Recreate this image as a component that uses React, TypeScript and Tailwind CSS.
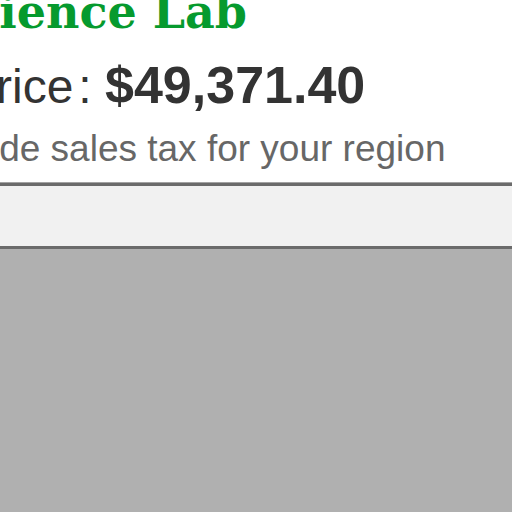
export default function App() {
  return (
    <div className="flex h-[512px] w-[512px] flex-col overflow-hidden bg-white">
      {/* product header, page is scrolled so the left edge is cut */}
      <div className="h-[183px] shrink-0 overflow-hidden whitespace-nowrap">
        <div className="-ml-[62px] -mt-[11px] font-['DejaVu_Serif'] text-[46px] font-bold leading-none text-[#069a2e]">
          Science Lab
        </div>
        <div className="-ml-[36px] mt-[24px] font-['Liberation_Sans'] leading-none text-[#333333]">
          <span className="text-[48px]">Price</span>
          <span className="ml-[5px] text-[48px]">: </span>
          <span className="text-[52px] font-bold">$49,371.40</span>
        </div>
        <div className="-ml-[190px] mt-[19px] font-['Liberation_Sans'] text-[37px] leading-none text-[#676767]">
          Prices include sales tax for your region
        </div>
      </div>
      <div className="h-[66px] shrink-0 border-y-[3px] border-[#6b6b6b] bg-[#f1f1f1] shadow-[0_-1px_0_#a3a3a3]" />
      <div className="flex-1 bg-[#b0b0b0]" />
    </div>
  );
}
